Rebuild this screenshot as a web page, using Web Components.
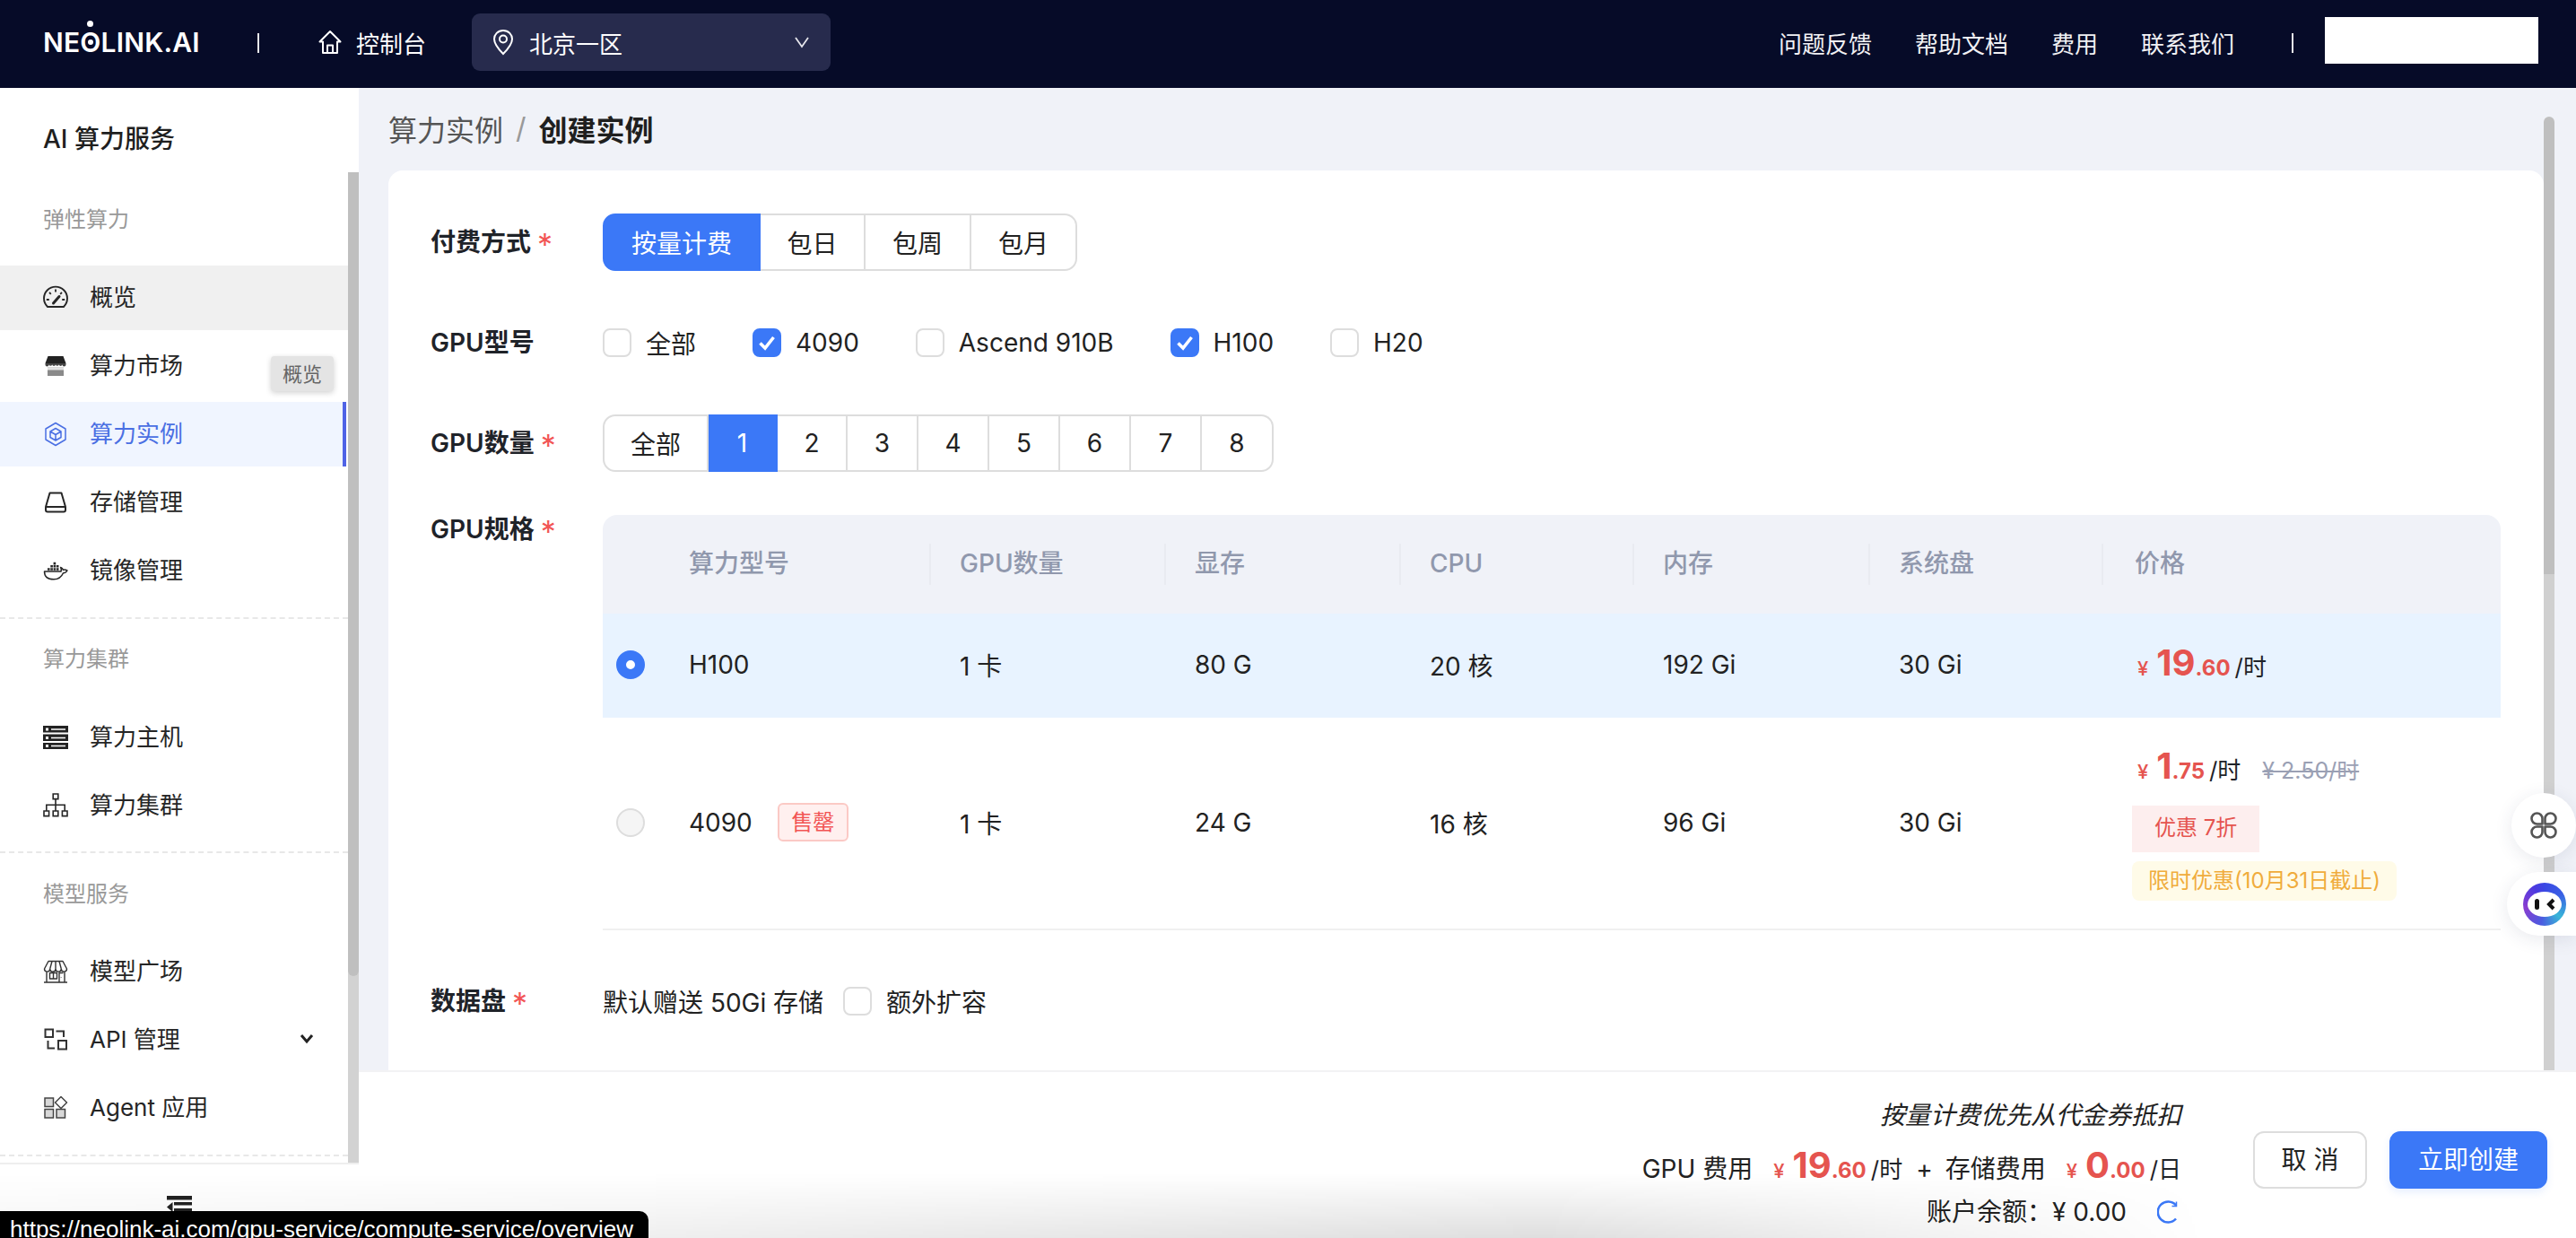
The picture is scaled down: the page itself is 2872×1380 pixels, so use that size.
<!DOCTYPE html>
<html lang="zh-CN"><head><meta charset="utf-8"><title>创建实例</title>
<style>
html,body{margin:0;padding:0;width:2872px;height:1380px;overflow:hidden;background:#f0f2f8;
font-family:Inter,"Noto Sans CJK SC",sans-serif;color:#1f2329}
</style></head><body>
<app-shell>
  <app-header slot="top"></app-header>
  <app-sidebar slot="side">
    <nav-group style="--h:66px;--mt:18px" label="弹性算力">
      <nav-item icon="gauge" hover>概览</nav-item>
      <nav-item icon="shop">算力市场</nav-item>
      <nav-item icon="cube" active>算力实例</nav-item>
      <nav-item icon="drive">存储管理</nav-item>
      <nav-item icon="whale">镜像管理</nav-item>
    </nav-group>
    <nav-rule style="--mt:16px"></nav-rule>
    <nav-group style="--h:90px;--mt:6px" label="算力集群">
      <nav-item icon="server">算力主机</nav-item>
      <nav-item icon="tree">算力集群</nav-item>
    </nav-group>
    <nav-rule style="--mt:15px"></nav-rule>
    <nav-group style="--h:92px;--mt:4px" label="模型服务">
      <nav-item icon="store">模型广场</nav-item>
      <nav-item icon="api" caret>API 管理</nav-item>
      <nav-item icon="agent">Agent 应用</nav-item>
    </nav-group>
    <nav-rule style="--mt:16px"></nav-rule>
  </app-sidebar>
  <page-main slot="main">
    <bread-crumb slot="crumb"><span>算力实例</span></bread-crumb>
    <form-row label="付费方式" req>
      <seg-group>
        <seg-item w="176" active>按量计费</seg-item><seg-item w="117">包日</seg-item><seg-item w="118">包周</seg-item><seg-item w="118">包月</seg-item>
      </seg-group>
    </form-row>
    <form-row label="GPU型号">
      <check-item>全部</check-item><check-item checked>4090</check-item><check-item>Ascend 910B</check-item><check-item checked>H100</check-item><check-item>H20</check-item>
    </form-row>
    <form-row label="GPU数量" req>
      <seg-group>
        <seg-item w="118">全部</seg-item><seg-item w="77" active>1</seg-item><seg-item w="78">2</seg-item><seg-item w="79">3</seg-item><seg-item w="79">4</seg-item><seg-item w="79">5</seg-item><seg-item w="79">6</seg-item><seg-item w="79">7</seg-item><seg-item w="80">8</seg-item>
      </seg-group>
    </form-row>
    <form-row label="GPU规格" req top>
      <spec-table></spec-table>
    </form-row>
    <form-row label="数据盘" req tight>
      <span class="plain" style="font-size:28px;margin-right:-41px;white-space:nowrap">默认赠送 50Gi 存储</span>
      <check-item>额外扩容</check-item>
    </form-row>
  </page-main>
  <page-footer slot="foot"></page-footer>
  <tip-bubble slot="over"></tip-bubble>
  <float-tools slot="over"></float-tools>
  <bottom-shade slot="over"></bottom-shade>
  <status-bubble slot="over">https://neolink-ai.com/gpu-service/compute-service/overview</status-bubble>
</app-shell>
<script>
function def(name, css, html){
  customElements.define(name, class extends HTMLElement{
    connectedCallback(){
      if(this.shadowRoot) return;
      const r=this.attachShadow({mode:'open'});
      r.innerHTML='<style>'+css+'</style>'+html(this);
    }
  });
}
const ICONS={
 gauge:`<path d="M5 24A13 13 0 1 1 23 24Z" fill="none" stroke="currentColor" stroke-width="1.9" stroke-linejoin="round"/><path d="M14 4.5v3M7 8l1.8 1.8M3.8 16h3M21 8l-1.8 1.8M24.2 16h-3" stroke="currentColor" stroke-width="1.8" fill="none"/><path d="M11.5 20L18 12.5" stroke="currentColor" stroke-width="3" stroke-linecap="round"/>`,
 shop:`<path d="M5.5 3H22.5L25.500 11H2.500Z" fill="#222"/><path d="M2.500 11h23v1.500a2 2 0 0 1-4 0a2 2 0 0 1-3.800 0a2 2 0 0 1-3.700 0a2 2 0 0 1-3.800 0a2 2 0 0 1-3.700 0a2 2 0 0 1-4 0Z" fill="#444"/><path d="M5 15.500h18V25H5Z" fill="#8a8a8a"/><path d="M5 15.500h18v3H5Z" fill="#fff" opacity=".75"/>`,
 cube:`<path d="M14 1.500L25 8V20L14 26.500L3 20V8Z M14 7.500L20 11V17.500L14 21L8 17.500V11Z M8 11L14 14.500L20 11M14 14.500V21" fill="none" stroke="currentColor" stroke-width="1.500" stroke-linejoin="round"/>`,
 drive:`<path d="M7.500 3.500H20.500L25 19V22.500a2 2 0 0 1-2 2H5a2 2 0 0 1-2-2V19Z M3 19H25" fill="none" stroke="currentColor" stroke-width="2" stroke-linejoin="round"/>`,
 whale:`<path d="M1.500 15H20c.6-1.800.3-3.300-.4-4.600c1.400.4 2.400 1.400 2.800 2.800c1.500-.4 3-.2 4.600.6c-1.100 2.400-3 3-4.500 3c-2 4.500-6 7-10.500 7C6.500 23.800 1.500 21.500 1.500 15Z" fill="none" stroke="currentColor" stroke-width="1.500" stroke-linejoin="round"/><path d="M5 11.200h2.600v2.600H5ZM8.300 11.200h2.600v2.600H8.300ZM11.600 11.200h2.600v2.600h-2.600ZM14.900 11.200h2.600v2.600h-2.600ZM8.300 8h2.600v2.600H8.300ZM11.600 8h2.600v2.600h-2.600ZM14.900 8h2.600v2.600h-2.600ZM11.600 4.800h2.600v2.600h-2.600Z" fill="currentColor"/>`,
 server:`<path d="M0 1h28v7.500H0ZM0 10.500h28V18H0ZM0 20h28v7H0Z" fill="#222"/><path d="M3 3.500h3v3H3ZM9 4.200h16v1.500H9ZM3 13h3v3H3ZM9 13.700h16v1.500H9ZM3 22h3v3H3ZM9 22.700h16v1.500H9Z" fill="#fff"/>`,
 tree:`<path d="M11.200 1h5.600v5.600h-5.600ZM1 20h5.600v5.600H1ZM11.200 20h5.600v5.600h-5.600ZM21.400 20H27v5.600h-5.600ZM14 6.600V20M3.800 20v-6.800h20.400V20" fill="none" stroke="currentColor" stroke-width="1.600"/>`,
 store:`<path d="M6 2.500H22L26.500 11a3.100 3.100 0 0 1-6.200 0a3.100 3.100 0 0 1-6.300 0a3.100 3.100 0 0 1-6.300 0a3.100 3.100 0 0 1-6.200 0Z M10 2.500L7.700 11M14 2.500V11M18 2.500L20.300 11M4 14V26H24V14M1 26H27M7.500 15.500h8v6.500h-8ZM11.500 15.500V22M18 26V15.500h4.500M20.200 20v.5" fill="none" stroke="#333" stroke-width="1.400" stroke-linejoin="round"/>`,
 api:`<path d="M2.500 2.500h8.500v8.500H2.500ZM14.500 4.500H23V11M5.500 15V23.500H13M17 15h9v9.500h-9Z" fill="none" stroke="#333" stroke-width="2"/>`,
 agent:`<path d="M2 3h9.500v9.500H2ZM2 15.500h9.500V25H2ZM15 15.500h9.500V25H15Z" fill="#d8d8d8" stroke="#444" stroke-width="1.500"/><path d="M20 1.500L26.500 8L20 14.500L13.500 8Z" fill="#fff" stroke="#444" stroke-width="1.500" stroke-linejoin="round"/>`
};
const svg=(k,s=28)=>`<svg width="${s}" height="${s}" viewBox="0 0 28 28" aria-hidden="true">${ICONS[k]}</svg>`;
const FONT='font-family:Inter,"Noto Sans CJK SC",sans-serif;';

def('app-shell',`
 :host{display:flex;flex-direction:column;position:relative;width:2872px;height:1380px;overflow:hidden}
 .row{display:flex;flex:1;min-height:0}
 .col{display:flex;flex-direction:column;flex:1;min-width:0}
`,()=>`<slot name="top"></slot><div class="row"><slot name="side"></slot><div class="col"><slot name="main"></slot><slot name="foot"></slot></div></div><slot name="over"></slot>`);

def('app-header',`
 :host{display:flex;align-items:center;height:98px;flex:none;background:#060b28;color:#fff;${FONT}padding:0 42px 4px 48px;box-sizing:border-box}
 .logo{font-size:30px;font-weight:600;letter-spacing:.2px;line-height:40px;white-space:nowrap;width:174px}
 .o{position:relative;display:inline-block}
 .o::before{content:"";position:absolute;left:50%;top:-4px;width:7px;height:7px;margin-left:-3.500px;border-radius:50%;background:#fff}
 .o::after{content:"";position:absolute;left:50%;top:50%;width:6px;height:6px;margin:-3px 0 0 -3px;border-radius:50%;background:#fff}
 .sep{width:2px;height:22px;background:#fff;flex:none;opacity:.9}
 .sep.a{margin:2px 66px 0 65px}
 .home{display:flex;align-items:center;gap:16px;font-size:26px;margin-right:51px}
 .home svg{display:block}
 .region{display:flex;align-items:center;width:400px;height:64px;box-sizing:border-box;background:#272b4d;border-radius:9px;padding:0 23px;font-size:26px}
 .region .t{margin-left:17px;flex:1}
 .sp{flex:1}
 nav{display:flex;gap:48px;font-size:26px;color:#f1f1f4}
 .sep.b{margin:2px 35px 0 64px}
 .box{width:238px;height:52px;background:#fff;flex:none;margin-top:-4px}
`,()=>`<div class="logo">NE<span class="o">O</span>LINK.AI</div><div class="sep a"></div>
 <div class="home"><svg width="26" height="28" viewBox="0 0 26 28"><path d="M13 2L24.500 13.500H21V26H5V13.500H1.500ZM10 26V17.500H16V26" fill="none" stroke="#fff" stroke-width="2" stroke-linejoin="round"/></svg><span>控制台</span></div>
 <div class="region"><svg width="24" height="30" viewBox="0 0 24 30"><path d="M12 2C6 2 2 6.500 2 11.500C2 18 9 25 12 28C15 25 22 18 22 11.500C22 6.500 18 2 12 2Z" fill="none" stroke="#fff" stroke-width="2"/><circle cx="12" cy="11.500" r="4" fill="none" stroke="#fff" stroke-width="2"/></svg><span class="t">北京一区</span>
 <svg width="18" height="16" viewBox="0 0 18 16"><path d="M2 3L9 13L16 3" fill="none" stroke="#e6e6ec" stroke-width="1.800"/></svg></div>
 <div class="sp"></div><nav><span>问题反馈</span><span>帮助文档</span><span>费用</span><span>联系我们</span></nav><div class="sep b"></div><div class="box"></div>`);

def('app-sidebar',`
 :host{display:flex;flex-direction:column;width:400px;flex:none;background:#fff;${FONT}color:#262626}
 .scroll{display:flex;height:1198px;flex:none}
 .list{width:388px;flex:none}
 h1{margin:0;height:114px;padding-left:48px;font-size:28px;font-weight:500;line-height:114px;color:#1f1f1f}
 .bar{width:12px;flex:none;display:flex;flex-direction:column;padding-top:94px;box-sizing:border-box}
 .thumb{height:896px;background:#bfbfbf;border-radius:0 0 6px 6px;flex:none;position:relative;z-index:1}
 .track{flex:1;background:#d2d2d2;margin-top:-6px}
 .foot{flex:1;border-top:2px solid #eeeeee;display:flex;justify-content:center;padding-top:34px;box-sizing:border-box}
`,()=>`<div class="scroll"><div class="list"><h1>AI 算力服务</h1><slot></slot></div><div class="bar"><div class="thumb"></div><div class="track"></div></div></div>
 <div class="foot"><svg width="28" height="28" viewBox="0 0 28 28"><path d="M0 1h28v4.500H0ZM8 8h20v3.500H8ZM8 15h20v4H8ZM0 13.500L6.500 8V19Z" fill="#222"/></svg></div>`);

def('nav-group',`
 :host{display:block}
 .lab{height:var(--h);line-height:var(--h);padding-left:48px;font-size:24px;color:#999}
 .items{display:flex;flex-direction:column;gap:4px;margin-top:var(--mt)}
`,(e)=>`<div class="lab">${e.getAttribute('label')}</div><div class="items"><slot></slot></div>`);

def('nav-rule',`:host{display:block;margin-top:var(--mt);border-top:2px dashed #e8e8e8}`,()=>``);

def('nav-item',`
 :host{display:flex;align-items:center;height:72px;padding-left:48px;gap:24px;font-size:26px;box-sizing:border-box;position:relative;color:#262626}
 :host([hover]){background:#f0f0f0}
 :host([active]){background:#f0f5ff;color:#4a6fe3;width:386px;border-right:4px solid #4f63e6}
 svg{display:block;flex:none}
 .t{display:block;padding-bottom:5px}
 .c{position:absolute;right:38px;top:28px}
`,(e)=>`${svg(e.getAttribute('icon'))}<span class="t"><slot></slot></span>${e.hasAttribute('caret')?'<svg class="c" width="16" height="14" viewBox="0 0 16 14"><path d="M2 3L8 10L14 3" fill="none" stroke="#222" stroke-width="3"/></svg>':''}`);

def('page-main',`
 :host{display:flex;height:1095px;flex:none;background:#f0f2f8;${FONT}overflow:hidden}
 .left{width:2436px;flex:none;padding-left:33px;box-sizing:border-box;display:flex;flex-direction:column}
 .card{flex:1;background:#fff;border-radius:16px 16px 0 0;padding:48px 0 0 47px;display:flex;flex-direction:column;gap:48px;overflow:hidden}
 .bar{width:12px;flex:none;margin-top:32px;display:flex;flex-direction:column}
 .thumb{height:510px;background:#bfbfbf;border-radius:6px 6px 0 0;flex:none}
 .track{flex:1;background:#d0d0d0}
`,()=>`<div class="left"><slot name="crumb"></slot><div class="card"><slot></slot></div></div><div class="bar"><div class="thumb"></div><div class="track"></div></div>`);

def('bread-crumb',`
 :host{display:flex;align-items:center;height:92px;box-sizing:border-box;padding-bottom:3px;flex:none;font-size:32px;color:#555}
 .s{margin:0 14px;color:#999}
 b{font-weight:600;color:#1f1f1f}
`,()=>`<slot></slot><span class="s">/</span><b>创建实例</b>`);

def('form-row',`
 :host{display:flex;align-items:center;min-height:64px;flex:none}
 :host([top]){align-items:flex-start}
 :host([tight]){margin-top:-1px}
 .l{width:192px;flex:none;font-size:28px;font-weight:600;line-height:32px;color:#1f2329;white-space:nowrap}
 .l i{font-style:normal;color:#f25555;margin-left:7px;font-weight:400;font-size:34px;line-height:0;vertical-align:-5px}
 .c{display:flex;align-items:center;gap:63px;font-size:28px;color:#222}
`,(e)=>`<div class="l">${e.getAttribute('label')}${e.hasAttribute('req')?'<i>*</i>':''}</div><div class="c"><slot></slot></div>`);

def('seg-group',`:host{display:inline-flex;height:64px}`,()=>`<slot></slot>`);
def('seg-item',`
 :host{display:flex;align-items:center;justify-content:center;box-sizing:border-box;height:64px;font-size:28px;color:#222;background:#fff;border:2px solid #dddddd;border-left:0}
 :host(:first-child){border-left:2px solid #dddddd;border-radius:14px 0 0 14px}
 :host(:last-child){border-radius:0 14px 14px 0}
 :host([active]){background:#3b78f7;color:#fff;border-color:#3b78f7}
`,(e)=>{e.style.width=e.getAttribute('w')+'px';return '<slot></slot>'});

def('check-item',`
 :host{display:inline-flex;align-items:center;gap:16px;font-size:28px;color:#222;white-space:nowrap}
 .b{width:32px;height:32px;box-sizing:border-box;border:2px solid #ddd;border-radius:8px;background:#fff;display:block;flex:none}
 :host([checked]) .b{background:#3b78f7;border-color:#3b78f7}
`,(e)=>`<svg class="b" viewBox="0 0 28 28">${e.hasAttribute('checked')?'<path d="M6.500 14.500L12 20L21.500 8" fill="none" stroke="#fff" stroke-width="3.600"/>':''}</svg><slot></slot>`);

def('price-tag',`
 :host{display:inline-flex;align-items:baseline;white-space:nowrap;font-size:26px;color:#1f2329}
 .y{font-size:22px;color:#e5544f;margin-right:9px;font-weight:500}
 .i{font-size:40px;font-weight:700;color:#e5544f}
 .d{font-size:24px;font-weight:700;color:#e5544f;margin-right:5px}
`,(e)=>`<span class="y">¥</span><span class="i">${e.getAttribute('int')}</span><span class="d">${e.getAttribute('dec')}</span><span>${e.getAttribute('unit')}</span>`);

def('spec-table',`
 :host{display:block;width:2116px}
 .g{display:grid;grid-template-columns:96px 268px 262px 262px 260px 263px 260px 445px;font-size:28px;color:#222}
 .h{height:110px;background:#f0f2f8;border-radius:16px 16px 0 0;color:#9098ad;font-weight:500;align-items:center}
 .h span{display:block;line-height:44px;height:46px}
 .h span.d{border-left:2px solid #e9ebf1;padding-left:32px}
 .r1{height:116px;background:#e8f3ff;align-items:center;padding-bottom:2px;box-sizing:border-box}
 .r2{height:237px;align-items:center;border-bottom:2px solid #f0f0f0;box-sizing:border-box;padding-bottom:2px}
 .c{padding-left:34px;white-space:nowrap}
 .m{display:flex;align-items:center;gap:28px}
 .rd{width:32px;height:32px;border-radius:50%;box-sizing:border-box;margin-left:15px}
 .on{border:11px solid #3b78f7;background:#fff}
 .off{border:2px solid #ddd;background:#f5f5f5}
 .tag{display:inline-block;font-size:24px;line-height:39px;width:79px;text-align:center;box-sizing:border-box;border:2px solid #fbc9c5;background:#fff0ef;color:#f25555;border-radius:6px}
 .stack{display:flex;flex-direction:column;align-items:flex-start;align-self:start;padding-top:29px;margin-left:34px}
 .pl{display:flex;align-items:baseline;margin-left:6px;height:69px}
 s{font-size:25px;color:#9aa0b4;margin-left:24px;text-decoration-thickness:2px}
 .t1{height:52px;line-height:50px;padding:0 25px;background:#fdeeee;color:#e5544f;font-size:24px}
 .t2{margin-top:10px;height:44px;line-height:44px;padding:0 18px;background:#fffbe8;color:#f0ac3c;font-size:24px;border-radius:8px}
`,()=>`<div class="g h"><span></span><span>算力型号</span><span class="d">GPU数量</span><span class="d">显存</span><span class="d">CPU</span><span class="d">内存</span><span class="d">系统盘</span><span class="d" style="padding-left:35px">价格</span></div>
 <div class="g r1"><div class="rd on"></div><div>H100</div><div class="c">1 卡</div><div class="c">80 G</div><div class="c">20 核</div><div class="c">192 Gi</div><div class="c">30 Gi</div><div class="c" style="padding:0 0 6px 40px"><price-tag int="19" dec=".60" unit="/时"></price-tag></div></div>
 <div class="g r2"><div class="rd off"></div><div class="m"><span>4090</span><span class="tag">售罄</span></div><div class="c">1 卡</div><div class="c">24 G</div><div class="c">16 核</div><div class="c">96 Gi</div><div class="c">30 Gi</div>
 <div class="stack"><div class="pl"><price-tag int="1" dec=".75" unit="/时"></price-tag><s>¥ 2.50/时</s></div><div class="t1">优惠 7折</div><div class="t2">限时优惠(10月31日截止)</div></div></div>`);

def('page-footer',`
 :host{display:flex;justify-content:flex-end;height:187px;flex:none;background:#fff;border-top:2px solid #f2f2f4;box-sizing:border-box;${FONT}font-size:28px;color:#222;padding:0 32px 0 0;overflow:hidden}
 .info{display:flex;flex-direction:column;align-items:flex-end;padding-top:28px;margin-right:80px}
 .a{font-style:italic;height:40px;line-height:40px}
 .b{display:flex;align-items:baseline;height:58px;margin-top:7px;white-space:nowrap;line-height:58px}
 .p{margin:0 15px 0 23px}
 .plus{margin:0 14px 0 0}
 .c{display:flex;align-items:center;height:44px;line-height:44px;white-space:nowrap;margin-top:1px}
 .c svg{margin-left:34px;margin-right:3px;display:block}
 .btns{display:flex;gap:25px;padding-top:66px}
 .btn{width:127px;height:64px;box-sizing:border-box;border:2px solid #ddd;border-radius:12px;text-align:center;line-height:60px;background:#fff}
 .btn.pr{width:176px;border-color:#3b78f7;background:#3b78f7;color:#fff;box-shadow:0 4px 8px rgba(59,120,247,.12)}
`,()=>`<div class="info"><div class="a">按量计费优先从代金券抵扣</div>
 <div class="b"><span>GPU 费用</span><price-tag class="p" int="19" dec=".60" unit="/时"></price-tag><span class="plus">+</span><span>存储费用</span><price-tag class="p" style="margin-right:0" int="0" dec=".00" unit="/日"></price-tag></div>
 <div class="c"><span>账户余额：¥ 0.00</span><svg width="24" height="28" viewBox="0 0 24 28"><path d="M21 6.500A11.500 11.500 0 1 0 21 21.500" fill="none" stroke="#3b78f7" stroke-width="2.600"/><path d="M21.500 2.500V7.500H16.500" fill="none" stroke="#3b78f7" stroke-width="1.500"/></svg></div></div>
 <div class="btns"><div class="btn">取 消</div><div class="btn pr">立即创建</div></div>`);

def('tip-bubble',`
 :host{position:absolute;left:302px;top:397px;width:70px;height:39px;box-sizing:border-box;padding-bottom:3px;background:#e4e4e4;border-radius:4px;box-shadow:0 2px 6px rgba(0,0,0,.18);display:flex;align-items:center;justify-content:center;font-size:22px;color:#666;${FONT}}
`,()=>`<span>概览</span>`);

def('float-tools',`
 .a,.b{position:absolute;background:#fff;box-shadow:0 4px 20px rgba(40,50,90,.10);display:flex;align-items:center;justify-content:center}
 .a{left:2800px;top:884px;width:72px;height:72px;border-radius:50%}
 .b{left:2795px;top:972px;width:77px;height:71px;border-radius:36px 0 0 36px;box-sizing:border-box;justify-content:flex-start;padding-left:18px}
 .m{width:48px;height:48px;border-radius:50%;background:conic-gradient(from 0deg,#3a48e4,#3a5fe4 60deg,#38b6d8 130deg,#4a5be0 190deg,#8a3dd0 260deg,#4a3ae0 330deg,#3a48e4);display:flex;align-items:center;justify-content:center}
 .i{width:38px;height:28px;border-radius:50%/50%;background:#fff;display:block}
`,()=>`<div class="a"><svg width="30" height="30" viewBox="0 0 30 30"><g fill="none" stroke="#555" stroke-width="2.600" stroke-linejoin="round"><path d="M13.500 13.500H7.500a6 6 0 1 1 6-6Z"/><path d="M16.500 13.500H22.500a6 6 0 1 0-6-6Z"/><path d="M13.500 16.500H7.500a6 6 0 1 0 6 6Z"/><path d="M16.500 16.500H22.500a6 6 0 1 1-6 6Z"/></g></svg></div>
 <div class="b"><div class="m"><svg class="i" viewBox="0 0 38 28"><rect x="8" y="8" width="5" height="12" rx="2.500" fill="#111"/><path d="M29 9L24 14L29 19" fill="none" stroke="#111" stroke-width="4"/></svg></div></div>`);

def('bottom-shade',`
 :host{position:absolute;left:0;bottom:0;width:2460px;height:72px;pointer-events:none;background:linear-gradient(to top,rgba(0,0,0,.13),rgba(0,0,0,0));-webkit-mask-image:linear-gradient(to right,rgba(0,0,0,.3) 0%,rgba(0,0,0,.5) 30%,#000 70%,transparent 100%)}
`,()=>``);

def('status-bubble',`
 :host{position:absolute;left:0;bottom:0;height:30px;width:723px;box-sizing:border-box;background:#000;color:#fff;border-radius:0 10px 0 0;padding-left:11px;font:26px/40px "Liberation Sans",sans-serif;white-space:nowrap;overflow:hidden}
`,()=>`<slot></slot>`);
</script>
</body></html>
